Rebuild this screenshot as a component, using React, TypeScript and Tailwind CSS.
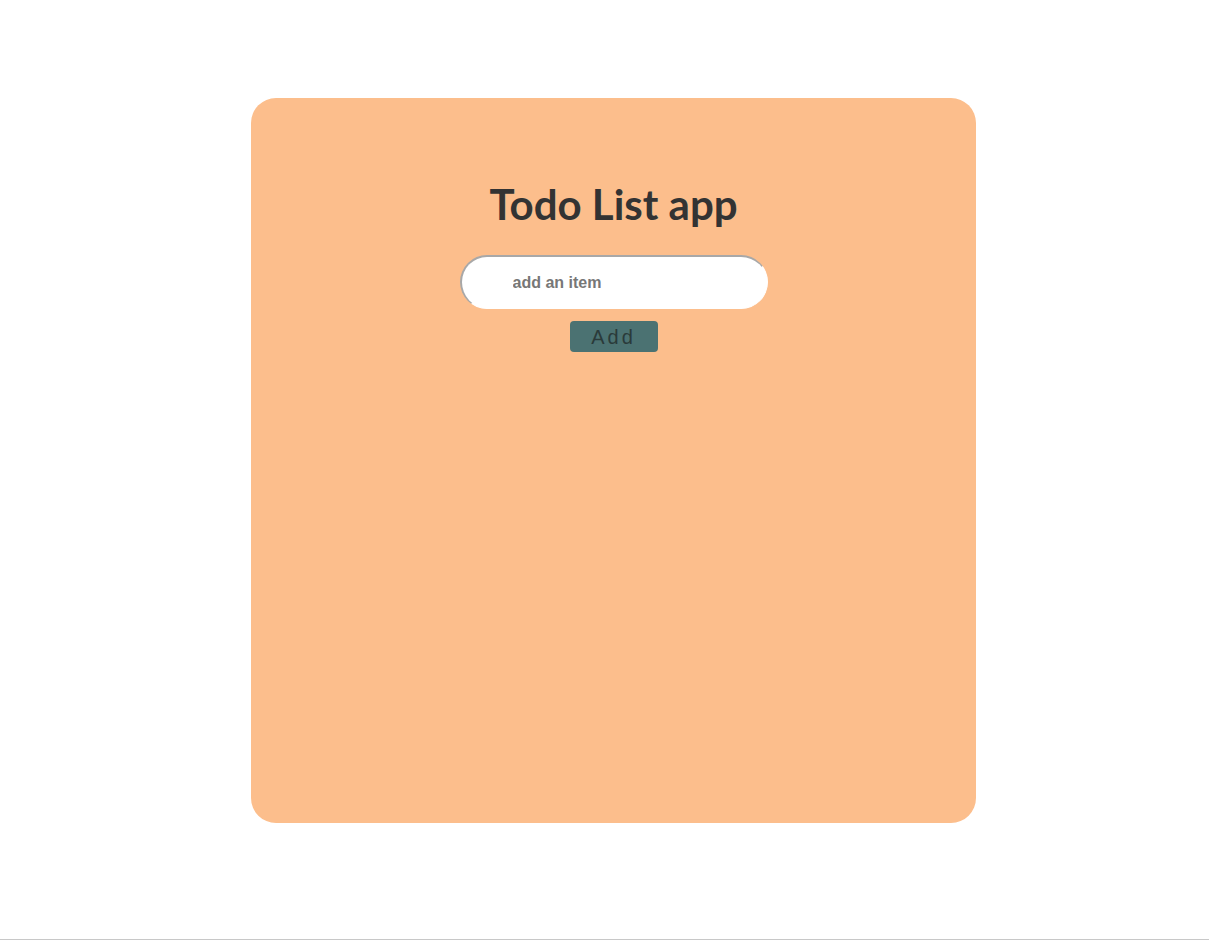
import { useState } from "react";

export default function App() {
  const [item, setItem] = useState("");

  return (
    <div className="flex h-[940px] flex-col border-b border-[#c8c8c8] bg-white">
      <div className="flex justify-center pt-[98px] pl-[18px]">
        <div className="flex h-[725px] w-[725px] flex-col items-center rounded-[25px] bg-[#fcbe8c] pt-[180px]">
          <h1 className="font-['Lato',sans-serif] text-[42px] leading-none font-bold text-[#333333] -mt-[95px]">
            Todo List app
          </h1>
          <input
            value={item}
            onChange={(e) => setItem(e.target.value)}
            placeholder="add an item"
            className="mt-[30px] h-[54px] w-[308px] rounded-full border-t-2 border-l-2 border-r border-b border-t-[#a8a8a8] border-l-[#a8a8a8] border-r-white border-b-white bg-white pl-[51px] font-['Liberation_Sans',sans-serif] text-base font-bold text-[#333] outline-none placeholder:text-[#777777]"
          />
          <button
            type="button"
            className="mt-3 h-[31px] w-[88px] rounded-[4px] bg-[#4b7272] font-['Liberation_Sans',sans-serif] text-xl tracking-[3px] text-[#2a3a3a]"
          >
            Add
          </button>
        </div>
      </div>
    </div>
  );
}
